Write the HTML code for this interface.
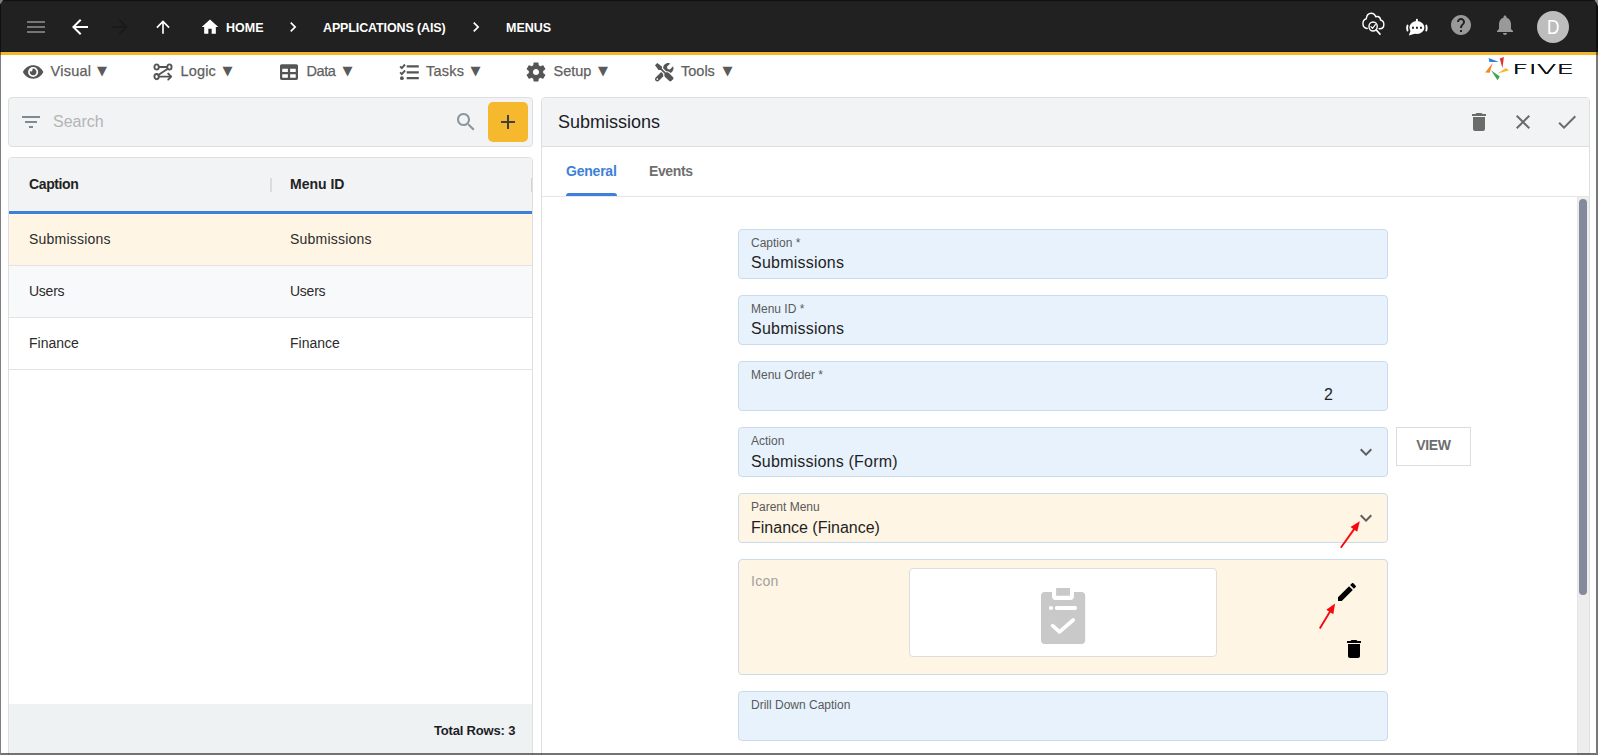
<!DOCTYPE html>
<html lang="en">
<head>
<meta charset="utf-8">
<title>Menus - Five</title>
<style>
*{box-sizing:border-box;margin:0;padding:0}
html,body{width:1598px;height:755px;overflow:hidden;background:#fff;font-family:"Liberation Sans",sans-serif;color:#212121}
.abs{position:absolute}
#app{position:absolute;left:0;top:0;width:1598px;height:755px;overflow:hidden;background:#fff}
/* window frame */
#frameL{left:0;top:0;width:1px;height:755px;background:rgba(0,0,0,.5)}
#frameR{left:1596px;top:0;width:2px;height:755px;background:rgba(0,0,0,.53)}
#frameB{left:1px;top:753px;width:1595px;height:2px;background:rgba(0,0,0,.55)}
/* header */
#hdr{left:0;top:0;width:1598px;height:52px;background:#212121;border-bottom:1px solid #181a21}
#hdrTop{left:1px;top:0;width:1595px;height:1px;background:rgba(0,0,0,.5)}
#stripe{left:0;top:52px;width:1598px;height:3px;background:#f5b52a}
.bc{position:absolute;top:1px;height:52px;line-height:54px;color:#fff;font-weight:bold;font-size:12.5px;white-space:nowrap}
svg{position:absolute;display:block;overflow:visible}
/* toolbar */
.tb{position:absolute;top:55px;height:32px;line-height:32px;font-size:14.5px;color:#5f5f5f;white-space:nowrap}
.tri{position:absolute;font-style:normal;font-family:"DejaVu Sans","Liberation Sans",sans-serif;font-size:13px;line-height:16px;color:#5a5a5a}
/* panels */
.panel{position:absolute;background:#fff;border:1px solid #dfdfdf;border-radius:4px}
.phead{position:absolute;background:#f1f3f4}
.t{position:absolute;white-space:nowrap}
.cell{position:absolute;font-size:14px;color:#2b2b2b;white-space:nowrap}
.fld{position:absolute;left:738px;width:650px;height:50px;background:#e7f2fc;border:1px solid #cbdbea;border-radius:4px}
.fld.y{background:#fef5e4}
.lbl{position:absolute;left:12px;top:6px;font-size:12px;color:#5a5a5a;white-space:nowrap}
.val{position:absolute;left:12px;top:24px;font-size:16px;color:#1f1f1f;white-space:nowrap}
#bc2{letter-spacing:-.12px}
.tb{-webkit-text-stroke:.25px #5f5f5f}
#th1{letter-spacing:-.38px}
#tb1{letter-spacing:.25px}
#tb2{letter-spacing:.15px}
#tb3{letter-spacing:-.45px}
#tb4{letter-spacing:.25px}
#c11,#c12{letter-spacing:.22px}
#c21,#c22{letter-spacing:-.25px}
#tot{letter-spacing:-.18px}
#tab1{letter-spacing:-.22px}
#tab2{letter-spacing:-.38px}
#v1,#v2{letter-spacing:.22px}
#v4{letter-spacing:.2px;top:25px}
#v5{top:25px}
</style>
</head>
<body>
<div id="app">

<!-- HEADER -->
<div id="hdr" class="abs"></div>
<div id="hdrTop" class="abs"></div>
<div id="stripe" class="abs"></div>
<svg style="left:24px;top:15px" width="24" height="24" viewBox="0 0 24 24"><path fill="#757575" d="M3 18h18v-2H3v2zm0-5h18v-2H3v2zm0-7v2h18V6H3z"/></svg>
<svg style="left:68px;top:15px" width="24" height="24" viewBox="0 0 24 24"><path fill="#fff" d="M20 11H7.83l5.590-5.590L12 4l-8 8 8 8 1.410-1.410L7.830 13H20v-2z"/></svg>
<svg style="left:108px;top:15px" width="24" height="24" viewBox="0 0 24 24"><path fill="#1a1a1a" d="M12 4l-1.410 1.410L16.170 11H4v2h12.170l-5.580 5.590L12 20l8-8z"/></svg>
<svg style="left:153px;top:17px" width="20" height="20" viewBox="0 0 24 24"><path fill="#fff" d="M4 12l1.410 1.410L11 7.830V20h2V7.830l5.580 5.590L20 12l-8-8-8 8z"/></svg>
<svg style="left:200px;top:17px" width="20" height="20" viewBox="0 0 24 24"><path fill="#fff" d="M10 20v-6h4v6h5v-8h3L12 3 2 12h3v8z"/></svg>
<div class="bc" id="bc1" style="left:226px">HOME</div>
<svg style="left:283px;top:17px" width="20" height="20" viewBox="0 0 24 24"><path fill="#fff" d="M10 6L8.590 7.410 13.170 12l-4.580 4.590L10 18l6-6z"/></svg>
<div class="bc" id="bc2" style="left:323px">APPLICATIONS (AIS)</div>
<svg style="left:466px;top:17px" width="20" height="20" viewBox="0 0 24 24"><path fill="#fff" d="M10 6L8.590 7.410 13.170 12l-4.580 4.590L10 18l6-6z"/></svg>
<div class="bc" id="bc3" style="left:506px">MENUS</div>
<!-- right icons -->
<svg style="left:1362.400px;top:12.400px" width="22.600" height="24" viewBox="0 0 24 24" preserveAspectRatio="none" fill="none" stroke="#fff" stroke-width="1.500" stroke-linecap="round" stroke-linejoin="round"><path d="M5.600 16.500C2.800 16.300 1 14.200 1 11.600 1 9.100 2.500 7.300 4.600 6.800 4.900 3.600 7 1.300 9.800 1.300c2.200 0 4 1.300 4.800 3.400.7-.3 1.500-.3 2.200-.2 1.700.4 2.900 1.800 2.900 3.500 2.100.5 3.500 2.300 3.500 4.400 0 2.400-1.700 4.200-4.200 4.300h-.8"/><circle cx="11.800" cy="14.500" r="4.400"/><path d="M15.100 17.900l4 4.200" stroke-width="1.700"/><path d="M9.500 14.600l1.700 1.700 3-3.700" stroke-width="1.300"/></svg>
<svg style="left:1405px;top:17px" width="24" height="20" viewBox="0 0 24 20"><ellipse cx="11.900" cy="10.500" rx="7.500" ry="6.500" fill="#fff"/><path fill="#fff" d="M10.900 5.500V2.700a1 1 0 0 1 2 0v2.800zM5.600 13.500L3.800 18.400l6.700-2z"/><path d="M2.500 8.600Q1.600 11 2.500 13.500M21.300 8.600Q22.200 11 21.300 13.500" fill="none" stroke="#fff" stroke-width="1.900" stroke-linecap="round"/><path fill="#212121" d="M7 9.800h1.900v1.900H7zM11 9.800h1.900v1.900H11zM15 9.800h1.900v1.900H15z"/></svg>
<svg style="left:1449px;top:13px" width="24" height="24" viewBox="0 0 24 24"><path fill="#999" d="M12 2C6.480 2 2 6.480 2 12s4.480 10 10 10 10-4.480 10-10S17.520 2 12 2zm1 17h-2v-2h2v2zm2.070-7.750l-.9.920C13.450 12.900 13 13.500 13 15h-2v-.5c0-1.100.45-2.100 1.170-2.830l1.240-1.260c.37-.36.590-.86.590-1.410 0-1.100-.9-2-2-2s-2 .9-2 2H8c0-2.210 1.790-4 4-4s4 1.790 4 4c0 .88-.36 1.680-.93 2.250z"/></svg>
<svg style="left:1493px;top:13px" width="24" height="24" viewBox="0 0 24 24"><path fill="#999" d="M12 22c1.100 0 2-.9 2-2h-4c0 1.100.89 2 2 2zm6-6v-5c0-3.070-1.640-5.640-4.500-6.320V4c0-.83-.67-1.500-1.500-1.500s-1.500.67-1.500 1.500v.68C7.630 5.360 6 7.920 6 11v5l-2 2v1h16v-1l-2-2z"/></svg>
<div class="abs" style="left:1537px;top:11px;width:32px;height:32px;border-radius:16px;background:#bdbdbd;color:#fff;font-size:20px;line-height:33px;text-align:center"><span style="display:inline-block;transform:scaleX(.86)">D</span></div>

<!-- logo -->
<svg style="left:1484px;top:56px" width="92" height="26" viewBox="1484 56 92 26"><path fill="#2f7de1" d="M1488.700 58l.7 4.100 9.400-.2z"/><path fill="#e0312f" d="M1499.800 58.500l4.100-1.400-1.500 11.200z"/><path fill="#f7b52a" d="M1506 67.900l2.900 2.600-11.400 3z"/><path fill="#3da64a" d="M1491 70.200l8.800 6.400-2.300 3.700z"/><path fill="#f78528" d="M1492.600 63.100l-7.400 9.400 4.500.3z"/></svg>
<div class="abs" id="five" style="left:1512px;top:60.600px;font-family:'DejaVu Sans','Liberation Sans',sans-serif;font-weight:200;font-size:13.500px;line-height:16px;color:#111;transform-origin:0 0;transform:scaleX(2.110);text-shadow:0 .3px 0 #111,0 -.3px 0 #111,.1px 0 0 #111;white-space:nowrap">FIVE</div>
<!-- TOOLBAR -->
<svg style="left:23px;top:62.5px" width="20.25" height="18" viewBox="0 0 576 512"><path fill="#555" d="M572.52 241.4C518.29 135.59 410.93 64 288 64S57.68 135.64 3.48 241.41a32.35 32.35 0 0 0 0 29.19C57.71 376.41 165.07 448 288 448s230.32-71.64 284.52-177.41a32.35 32.35 0 0 0 0-29.19zM288 400a144 144 0 1 1 144-144 143.93 143.93 0 0 1-144 144zm0-240a95.31 95.31 0 0 0-25.310 3.790 47.850 47.850 0 0 1-66.900 66.900A95.780 95.780 0 1 0 288 160z"/></svg>
<div class="tb" id="tb1" style="left:50.500px">Visual</div><i class="tri" style="left:97px;top:63px">▼</i>
<svg style="left:153px;top:63px" width="20" height="18" viewBox="0 0 20 18" fill="none" stroke="#555" stroke-width="1.9" stroke-linecap="round" stroke-linejoin="round"><ellipse cx="3.600" cy="4" rx="2.200" ry="2.600"/><ellipse cx="16.400" cy="4" rx="2.200" ry="2.600"/><ellipse cx="3.600" cy="13.600" rx="2.200" ry="2.600"/><path d="M5.900 4h8.200M14.800 5.800L5.300 12M5.900 13.600H18M15.200 10.600l3 3-3 3"/></svg>
<div class="tb" id="tb2" style="left:180.500px">Logic</div><i class="tri" style="left:222.5px;top:63px">▼</i>
<svg style="left:280px;top:62.500px" width="18" height="18" viewBox="0 0 512 512"><path fill="#555" d="M464 32H48C21.490 32 0 53.490 0 80v352c0 26.510 21.490 48 48 48h416c26.510 0 48-21.490 48-48V80c0-26.510-21.490-48-48-48zM224 416H64v-96h160v96zm0-160H64v-96h160v96zm224 160H288v-96h160v96zm0-160H288v-96h160v96z"/></svg>
<div class="tb" id="tb3" style="left:306.500px">Data</div><i class="tri" style="left:342.5px;top:63px">▼</i>
<svg style="left:399px;top:63px" width="21" height="18" viewBox="0 0 21 18" fill="none" stroke="#555" stroke-width="1.800"><path d="M7.700 3.300H19.800M7.700 9.300H19.800M7.700 15.200H19.800" stroke-width="2.300"/><path d="M1.100 3.400l1.700 1.700 3.200-3.600M1.100 9.400l1.700 1.700 3.200-3.600" stroke-width="1.900"/><circle cx="2.900" cy="15.200" r="1.900" fill="#555" stroke="none"/></svg>
<div class="tb" id="tb4" style="left:426px">Tasks</div><i class="tri" style="left:470.5px;top:63px">▼</i>
<svg style="left:523.500px;top:60px" width="24" height="24" viewBox="0 0 24 24"><path fill="#555" d="M19.140 12.940c.04-.3.06-.61.06-.94 0-.32-.02-.64-.07-.94l2.030-1.580c.18-.14.23-.41.12-.61l-1.920-3.320c-.12-.22-.37-.29-.59-.22l-2.390.96c-.5-.38-1.030-.7-1.620-.94l-.36-2.540c-.04-.24-.24-.41-.48-.41h-3.840c-.24 0-.43.17-.47.41l-.36 2.540c-.59.24-1.130.57-1.620.94l-2.390-.96c-.22-.08-.47 0-.59.22L2.740 8.870c-.12.21-.08.47.12.61l2.030 1.580c-.05.3-.09.63-.09.94s.02.640.07.940l-2.030 1.580c-.18.14-.23.41-.12.61l1.920 3.320c.12.22.37.29.59.22l2.390-.96c.5.38 1.030.7 1.620.94l.36 2.540c.05.24.24.41.48.41h3.840c.24 0 .44-.17.47-.41l.36-2.540c.59-.24 1.130-.56 1.620-.94l2.390.96c.22.08.47 0 .59-.22l1.920-3.320c.12-.22.07-.47-.12-.61l-2.010-1.580zM12 15.100c-1.710 0-3.100-1.390-3.100-3.100s1.390-3.100 3.100-3.100 3.100 1.390 3.100 3.100-1.390 3.100-3.100 3.100z"/></svg>
<div class="tb" id="tb5" style="left:553.500px">Setup</div><i class="tri" style="left:598px;top:63px">▼</i>
<svg style="left:654.600px;top:62.600px" width="18.500" height="18.500" viewBox="0 0 512 512"><path fill="#555" d="M501.100 395.700L384 278.600c-23.100-23.100-57.600-27.600-85.400-13.900L192 158.100V96L64 0 0 64l96 128h62.100l106.600 106.600c-13.600 27.800-9.200 62.300 13.900 85.400l117.100 117.100c14.600 14.600 38.200 14.600 52.700 0l52.700-52.700c14.500-14.600 14.500-38.200 0-52.700zM331.700 225c28.300 0 54.900 11 74.900 31l19.400 19.400c15.800-6.900 30.800-16.500 43.800-29.500 37.100-37.100 49.700-89.300 37.900-136.700-2.200-9-13.500-12.100-20.100-5.500l-74.400 74.400-67.900-11.300L334 98.900l74.400-74.400c6.600-6.600 3.400-17.900-5.700-20.200-47.400-11.700-99.600.9-136.600 37.900-28.500 28.500-41.900 66.100-41.200 103.600l82.100 82.100c8.100-1.900 16.500-2.900 24.700-2.900zm-103.900 82l-56.700-56.700L18.700 402.800c-25 25-25 65.500 0 90.500s65.500 25 90.500 0l123.600-123.600c-7.600-19.900-9.900-41.600-5-62.700zM64 472c-13.200 0-24-10.800-24-24 0-13.300 10.700-24 24-24s24 10.700 24 24c0 13.200-10.700 24-24 24z"/></svg>
<div class="tb" id="tb6" style="left:681px">Tools</div><i class="tri" style="left:722.5px;top:63px">▼</i>

<!-- LEFT PANEL -->
<div class="panel" style="left:8px;top:97px;width:525px;height:50px;background:#f1f3f4"></div>
<svg style="left:19px;top:110px" width="24" height="24" viewBox="0 0 24 24"><path fill="#7e8b97" d="M10 18h4v-2h-4v2zM3 6v2h18V6H3zm3 7h12v-2H6v2z"/></svg>
<div class="t" id="srch" style="left:53px;top:112px;font-size:16px;line-height:20px;color:#b4b5b6">Search</div>
<svg style="left:454px;top:110px" width="24" height="24" viewBox="0 0 24 24"><path fill="#8b959d" d="M15.500 14h-.79l-.28-.27C15.410 12.590 16 11.110 16 9.500 16 5.910 13.090 3 9.500 3S3 5.910 3 9.500 5.910 16 9.500 16c1.610 0 3.090-.59 4.230-1.570l.27.28v.79l5 4.990L20.490 19l-4.990-5zm-6 0C7.010 14 5 11.990 5 9.500S7.010 5 9.500 5 14 7.010 14 9.500 11.990 14 9.500 14z"/></svg>
<div class="abs" style="left:488px;top:102px;width:40px;height:40px;border-radius:5px;background:#f6b82c"></div>
<svg style="left:496px;top:110px" width="24" height="24" viewBox="0 0 24 24"><path fill="#3f3f3f" d="M19 13h-6v6h-2v-6H5v-2h6V5h2v6h6v2z"/></svg>

<div class="panel" style="left:8px;top:157px;width:525px;height:600px;border-radius:4px 4px 0 0"></div>
<div class="phead" style="left:9px;top:158px;width:523px;height:53px;border-radius:3px 3px 0 0"></div>
<div class="abs" style="left:9px;top:211px;width:523px;height:3px;background:#3d7fd9"></div>
<div class="abs" style="left:270px;top:178px;width:2px;height:14px;background:#dcdcdc"></div>
<div class="abs" style="left:531px;top:178px;width:1px;height:14px;background:#d4d4d4"></div>
<div class="t" id="th1" style="left:29px;top:174px;font-size:14px;line-height:20px;font-weight:bold;color:#222">Caption</div>
<div class="t" id="th2" style="left:290px;top:174px;font-size:14px;line-height:20px;font-weight:bold;color:#222">Menu ID</div>
<div class="abs" style="left:9px;top:214px;width:523px;height:52px;background:#fef5e4;border-bottom:1px solid #e3e3e3"></div>
<div class="abs" style="left:9px;top:266px;width:523px;height:52px;background:#f8f9fa;border-bottom:1px solid #e3e3e3"></div>
<div class="abs" style="left:9px;top:318px;width:523px;height:52px;background:#fff;border-bottom:1px solid #e3e3e3"></div>
<div class="cell" id="c11" style="left:29px;top:229px;line-height:20px">Submissions</div>
<div class="cell" id="c12" style="left:290px;top:229px;line-height:20px">Submissions</div>
<div class="cell" id="c21" style="left:29px;top:281px;line-height:20px">Users</div>
<div class="cell" id="c22" style="left:290px;top:281px;line-height:20px">Users</div>
<div class="cell" id="c31" style="left:29px;top:333px;line-height:20px">Finance</div>
<div class="cell" id="c32" style="left:290px;top:333px;line-height:20px">Finance</div>
<div class="abs" style="left:9px;top:704px;width:523px;height:49px;background:#eef2f3"></div>
<div class="t" id="tot" style="left:434px;top:721px;font-size:13px;line-height:20px;font-weight:bold;color:#1d1d27">Total Rows: 3</div>

<!-- RIGHT PANEL -->
<div class="panel" style="left:541px;top:97px;width:1049px;height:670px;border-radius:4px 4px 0 0"></div>
<div class="phead" style="left:542px;top:98px;width:1047px;height:49px;border-radius:3px 3px 0 0;border-bottom:1px solid #dfdfdf"></div>
<div class="t" id="ttl" style="left:558px;top:110px;font-size:18px;line-height:24px;color:#1b1b27">Submissions</div>
<svg style="left:1467px;top:110px" width="24" height="24" viewBox="0 0 24 24"><path fill="#6b6b6b" d="M6 19c0 1.100.9 2 2 2h8c1.100 0 2-.9 2-2V7H6v12zM19 4h-3.500l-1-1h-5l-1 1H5v2h14V4z"/></svg>
<svg style="left:1511px;top:110px" width="24" height="24" viewBox="0 0 24 24"><path fill="#6b6b6b" d="M19 6.410L17.590 5 12 10.590 6.410 5 5 6.410 10.590 12 5 17.590 6.410 19 12 13.410 17.590 19 19 17.590 13.410 12z"/></svg>
<svg style="left:1555px;top:110px" width="24" height="24" viewBox="0 0 24 24"><path fill="#6b6b6b" d="M9 16.170L4.830 12l-1.420 1.410L9 19 21 7l-1.410-1.410z"/></svg>
<!-- tabs -->
<div class="t" id="tab1" style="left:566px;top:161px;font-size:14px;line-height:20px;font-weight:bold;color:#3e80d8">General</div>
<div class="t" id="tab2" style="left:649px;top:161px;font-size:14px;line-height:20px;font-weight:bold;color:#6f6f6f">Events</div>
<div class="abs" style="left:542px;top:196px;width:1047px;height:1px;background:#e6e6e6"></div>
<div class="abs" style="left:566px;top:193px;width:51px;height:3px;background:#3d7fd9;border-radius:3px 3px 0 0"></div>
<!-- scrollbar -->
<div class="abs" style="left:1577px;top:197px;width:12px;height:560px;background:#ededed;border-left:1px solid #e6e6e6"></div>
<div class="abs" style="left:1579px;top:199px;width:8px;height:396px;background:#838a9c;border-radius:4px"></div>
<!-- fields -->
<div class="fld" style="top:229px"><span class="lbl">Caption *</span><span class="val" id="v1">Submissions</span></div>
<div class="fld" style="top:295px"><span class="lbl">Menu ID *</span><span class="val" id="v2">Submissions</span></div>
<div class="fld" style="top:361px"><span class="lbl">Menu Order *</span><span class="val" id="v3" style="left:auto;right:54px">2</span></div>
<div class="fld" style="top:427px"><span class="lbl">Action</span><span class="val" id="v4">Submissions (Form)</span></div>
<svg style="left:1354px;top:440px" width="24" height="24" viewBox="0 0 24 24"><path fill="#5f5f5f" d="M16.590 8.590L12 13.170 7.410 8.590 6 10l6 6 6-6z"/></svg>
<div class="abs" id="viewbtn" style="left:1396px;top:427px;width:75px;height:39px;border:1px solid #dcdcdc;background:#fff;font-size:14px;font-weight:bold;color:#6e6e6e;text-align:center;line-height:35px;letter-spacing:-.3px">VIEW</div>
<div class="fld y" style="top:493px"><span class="lbl">Parent Menu</span><span class="val" id="v5">Finance (Finance)</span></div>
<svg style="left:1354px;top:506px" width="24" height="24" viewBox="0 0 24 24"><path fill="#5f5f5f" d="M16.590 8.590L12 13.170 7.410 8.590 6 10l6 6 6-6z"/></svg>
<div class="fld y" style="top:559px;height:116px"><span class="lbl" id="icl" style="top:13px;font-size:14px;color:#a1a09e;letter-spacing:.25px">Icon</span></div>
<div class="abs" style="left:909px;top:568px;width:308px;height:89px;background:#fff;border:1px solid #dddddd;border-radius:4px"></div>
<svg style="left:1041px;top:588px" width="44" height="56" viewBox="0 0 44 56"><path fill="#c9c9c9" d="M15.100 0h13.900v7.800H15.100zM3.500 3.900H11v4.800c0 1.800 1.400 3.200 3.200 3.200h15.500c1.800 0 3.200-1.400 3.200-3.200V3.900h7.800c1.900 0 3.500 1.600 3.500 3.500v45.100c0 1.900-1.600 3.500-3.500 3.500H3.500C1.600 56 0 54.400 0 52.500V7.400c0-1.900 1.600-3.500 3.500-3.500z"/><rect x="13.800" y="17.900" width="22.300" height="4.200" rx="2.100" fill="#fff"/><circle cx="10.050" cy="20" r="2.050" fill="#fff"/><path d="M11.600 37.700l6.900 6.100 13.700-11.800" fill="none" stroke="#fff" stroke-width="3.700" stroke-linecap="round" stroke-linejoin="round"/></svg>
<svg style="left:1334.500px;top:579.500px" width="24" height="24" viewBox="0 0 24 24"><path fill="#000" d="M3 17.250V21h3.750L17.810 9.940l-3.750-3.750L3 17.250zM20.710 7.040c.39-.39.39-1.020 0-1.410l-2.340-2.340c-.39-.39-1.020-.39-1.410 0l-1.830 1.830 3.750 3.750 1.830-1.830z"/></svg>
<svg style="left:1342px;top:636.500px" width="24" height="24" viewBox="0 0 24 24"><path fill="#000" d="M6 19c0 1.100.9 2 2 2h8c1.100 0 2-.9 2-2V7H6v12zM19 4h-3.500l-1-1h-5l-1 1H5v2h14V4z"/></svg>
<div class="fld" style="top:691px"><span class="lbl">Drill Down Caption</span></div>
<!-- red arrows -->
<svg style="left:0;top:0" width="1598" height="755" viewBox="0 0 1598 755"><g stroke="#f9070d" stroke-width="1.900" fill="#f9070d"><path d="M1340.800 547.700L1354.500 528.600"/><path d="M1359.800 521.200L1357.200 531.800 1350.500 527z" stroke="none"/><path d="M1319.800 628.400L1330.200 611.300"/><path d="M1335.100 603.400L1333.300 614.200 1326.300 609.800z" stroke="none"/></g></svg>

<!-- FRAME -->
<div id="frameL" class="abs"></div>
<div id="frameR" class="abs"></div>
<div id="frameB" class="abs"></div>
<svg style="left:0;top:0" width="1598" height="8" viewBox="0 0 1598 8"><path d="M1594.500 0h3.500v6.500l-1.300-3.300z" fill="#8e8e8e"/><path d="M0 0h3.200L0 4.600z" fill="#9a9a9a" opacity=".8"/></svg>
</div>
</body>
</html>
